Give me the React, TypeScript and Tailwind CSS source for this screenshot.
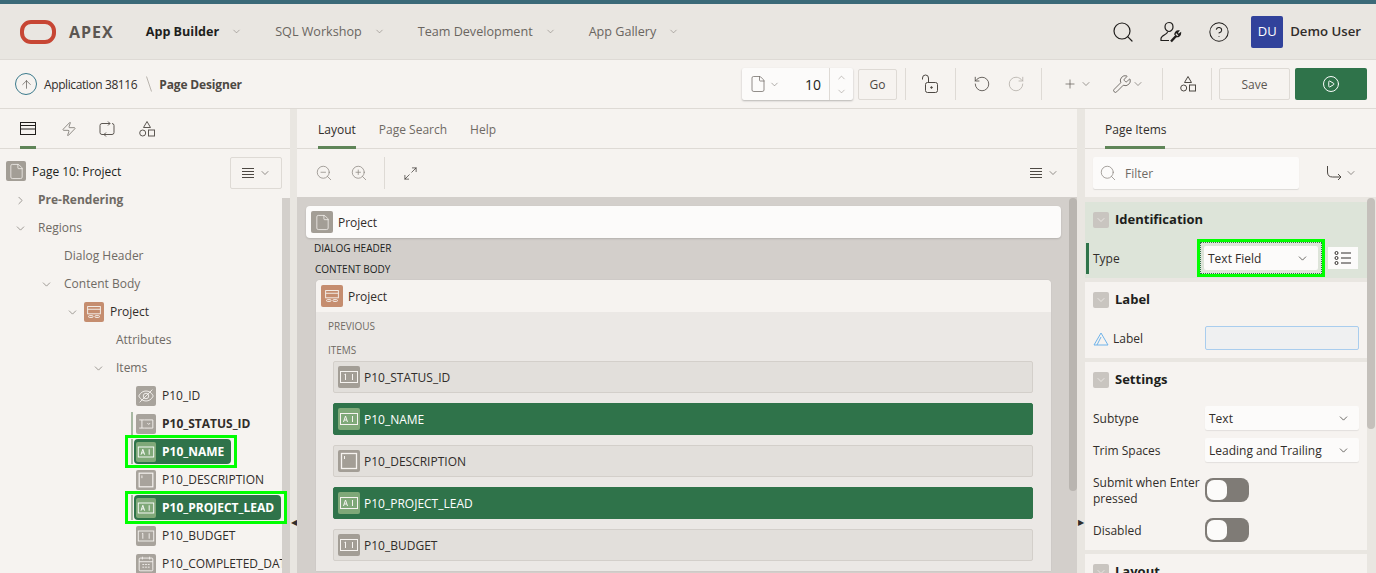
import { ReactNode } from "react";
import { ArrowUp, ChevronDown, ChevronRight, ChevronUp, CircleHelp, CirclePlay, File, Maximize2, Plus, RotateCcw, RotateCw, Search, Wrench, ZoomIn, ZoomOut, Zap } from "lucide-react";

type GlyphKind = "number" | "text" | "area" | "select" | "hidden" | "date";

function Glyph({ kind }: { kind: GlyphKind }) {
  return (
    <svg viewBox="0 0 22 22" className="w-[22px] h-[22px] block" fill="none" stroke="currentColor" strokeWidth="1">
      {kind === "hidden" ? (
        <>
          <path d="M3 11c2-4 5-5.500 8-5.500s6 1.500 8 5.500c-2 4-5 5.500-8 5.500s-6-1.500-8-5.500z" />
          <circle cx="11" cy="11" r="3" />
          <path d="M4 18L18 4" />
        </>
      ) : kind === "date" ? (
        <>
          <rect x="3.500" y="4.500" width="15" height="14" rx="1" />
          <path d="M3.500 8.500h15M7 3v3M15 3v3M7 11.500h2M10 11.500h2M13 11.500h2M7 14.500h2M10 14.500h2M13 14.500h2" />
        </>
      ) : kind === "area" ? (
        <>
          <rect x="3.500" y="3.500" width="15" height="15" strokeWidth="1.300" />
          <path d="M6.500 6v3" />
        </>
      ) : kind === "select" ? (
        <path d="M9.500 6.500h9v9h-9M3.500 6.500h6M3.500 15.500h6M6.500 6.500v9M12.500 10l1.500 1.500 1.500-1.500" />
      ) : kind === "text" ? (
        <>
          <rect x="2.500" y="5.500" width="17" height="11" />
          <path d="M5.500 14l2-6 2 6M6.200 12h2.600M14.500 8v6" />
        </>
      ) : (
        <>
          <rect x="2.500" y="5.500" width="17" height="11" />
          <path d="M6.500 8.500l1-.5v6M14.500 8v6" />
        </>
      )}
    </svg>
  );
}

function RegionGlyph() {
  return (
    <svg viewBox="0 0 22 22" className="w-[20px] h-[20px]" fill="none" stroke="#f6f3f0" strokeWidth="1">
      <rect x="4" y="5" width="14" height="8" />
      <path d="M4 8h14" />
      <rect x="5" y="15" width="5" height="2" rx="1" />
      <rect x="12" y="15" width="5" height="2" rx="1" />
    </svg>
  );
}

function Lines({ className }: { className?: string }) {
  return (
    <svg viewBox="0 0 14 12" className={`w-[14px] h-[12px] ${className ?? ""}`} fill="none" stroke="currentColor" strokeWidth="1">
      <path d="M1 1.500h12M1 4.500h12M1 7.500h12M1 10.500h12" />
    </svg>
  );
}

function ShapesIcon({ className }: { className?: string }) {
  return (
    <svg viewBox="0 0 16 18" className={`w-[16px] h-[18px] ${className ?? ""}`} fill="none" stroke="currentColor" strokeWidth="1">
      <path d="M8 1.500l3.500 6h-7z" />
      <circle cx="3.700" cy="13" r="3" />
      <rect x="9.500" y="10" width="6" height="6" />
    </svg>
  );
}

function PageIcon({ className }: { className: string }) {
  return (
    <span className={`flex flex-none items-center justify-center rounded-[2px] bg-[#a39e96] text-[#f6f3f0] ${className}`}>
      <File size={17} strokeWidth={1.1} />
    </span>
  );
}

function TopNav({ label, active }: { label: string; active?: boolean }) {
  return (
    <div className="flex items-center gap-[12px] mr-[33px]">
      <span className={`pt-[1px] ${active ? "font-bold text-[#201e1c]" : "text-[#6a655f]"}`}>{label}</span>
      <ChevronDown size={11} strokeWidth={1.2} className="text-[#7d7872]" />
    </div>
  );
}

function Sep() {
  return <div className="w-px h-[32px] bg-[#dedad5]" />;
}

function Tab({ label, active, width }: { label: string; active?: boolean; width?: string }) {
  return (
    <div className={`h-[40px] flex items-center text-[12px] border-b-[3px] pt-[4px] ${width ?? ""} ${active ? "border-[#5f8558] text-[#312d2a]" : "border-transparent text-[#6f6a64]"}`}>
      {label}
    </div>
  );
}

type TreeRow = {
  label: string;
  indent: string;
  chevron?: "right" | "down";
  kind?: GlyphKind;
  strong?: boolean;
  dark?: boolean;
  selected?: boolean;
  hasMark?: boolean;
  outlineWidth?: string;
};

const treeRows: TreeRow[] = [
  { label: "Pre-Rendering", indent: "pl-[14px]", chevron: "right", strong: true },
  { label: "Regions", indent: "pl-[14px]", chevron: "down" },
  { label: "Dialog Header", indent: "pl-[64px]" },
  { label: "Content Body", indent: "pl-[40px]", chevron: "down" },
  { label: "Project", indent: "pl-[66px]", chevron: "down", dark: true },
  { label: "Attributes", indent: "pl-[116px]" },
  { label: "Items", indent: "pl-[92px]", chevron: "down" },
  { label: "P10_ID", indent: "pl-[136px]", kind: "hidden", dark: true },
  { label: "P10_STATUS_ID", indent: "pl-[136px]", kind: "select", dark: true, strong: true, hasMark: true },
  { label: "P10_NAME", indent: "pl-[128px]", kind: "text", selected: true, outlineWidth: "w-[106px]" },
  { label: "P10_DESCRIPTION", indent: "pl-[136px]", kind: "area", dark: true },
  { label: "P10_PROJECT_LEAD", indent: "pl-[128px]", kind: "text", selected: true, outlineWidth: "w-[156px]" },
  { label: "P10_BUDGET", indent: "pl-[136px]", kind: "number", dark: true },
  { label: "P10_COMPLETED_DATE", indent: "pl-[136px]", kind: "date", dark: true },
];

function Tree({ row }: { row: TreeRow }) {
  const textColor = row.dark ? "text-[#312d2a]" : "text-[#6f6a64]";
  if (row.selected) {
    return (
      <div className={`relative z-10 h-[28px] ${row.indent}`}>
        <div className={`flex items-start h-[27px] pl-[3px] pr-[3px] pt-[1px] bg-[#f6f3f0] ${row.outlineWidth} outline-[3px] outline-[#00ff00]`}>
          <span className="w-[2px] h-[25px] bg-[#a7b8a2]" />
          <div className="flex-1 ml-[1px] flex items-center h-[25px] pl-[2px] rounded-[4px] bg-[#2f734a] text-white font-bold whitespace-nowrap">
            <span className="w-[20px] h-[20px] mr-[6px] flex-none rounded-[2px] bg-[#7fa878] flex items-center justify-center">
              <Glyph kind={row.kind ?? "text"} />
            </span>
            {row.label}
          </div>
        </div>
      </div>
    );
  }
  return (
    <div className={`relative h-[28px] w-[282px] overflow-hidden flex items-center whitespace-nowrap ${row.indent} ${textColor} ${row.strong ? "font-bold" : ""}`}>
      {row.hasMark && <span className="absolute left-[131px] top-[2px] h-[24px] w-[2px] bg-[#a7b8a2]" />}
      {row.chevron && (
        <span className={`${row.label === "Project" ? "w-[18px]" : "w-[24px]"} flex-none text-[#6f6a64]`}>
          {row.chevron === "right" ? <ChevronRight size={13} strokeWidth={1.2} /> : <ChevronDown size={13} strokeWidth={1.2} />}
        </span>
      )}
      {row.label === "Project" && (
        <span className="w-[20px] h-[20px] mr-[6px] rounded-[2px] bg-[#c58d6f] flex items-center justify-center">
          <RegionGlyph />
        </span>
      )}
      {row.kind && (
        <span className="w-[20px] h-[20px] mr-[6px] flex-none rounded-[2px] bg-[#a8a39c] text-[#f6f3f0] flex items-center justify-center">
          <Glyph kind={row.kind} />
        </span>
      )}
      {row.label}
    </div>
  );
}

function LayoutItem({ label, kind, active }: { label: string; kind: GlyphKind; active?: boolean }) {
  return (
    <div className={`h-[32px] flex items-center pl-[4px] rounded-[2px] border text-[12px] ${active ? "bg-[#2f734a] border-[#2f734a] text-white" : "bg-[#e2dfdb] border-[#d3cfca] text-[#312d2a]"}`}>
      <span className={`w-[22px] h-[22px] mr-[4px] rounded-[2px] flex items-center justify-center text-[#f6f3f0] ${active ? "bg-[#7fa878]" : "bg-[#a39e96]"}`}>
        <Glyph kind={kind} />
      </span>
      <span className="pt-[1px]">{label}</span>
    </div>
  );
}

function GroupHeader({ label }: { label: string }) {
  return (
    <div className="flex items-center h-[24px] pl-[8px]">
      <span className="w-[16px] h-[16px] mr-[6px] rounded-[2px] bg-[#c9c5c0] flex items-center justify-center text-[#f6f3f0]">
        <ChevronDown size={12} strokeWidth={1.4} />
      </span>
      <span className="text-[13px] font-bold text-[#201e1c]">{label}</span>
    </div>
  );
}

function Prop({ label, children, rowClass }: { label: ReactNode; children: ReactNode; rowClass?: string }) {
  return (
    <div className={`flex items-center pl-[8px] ${rowClass ?? "h-[32px]"}`}>
      <div className="w-[112px] pt-[1px] text-[12px] leading-[16px] text-[#312d2a]">{label}</div>
      {children}
    </div>
  );
}

function SelectBox({ value }: { value: string }) {
  return (
    <div className="w-[154px] h-[24px] rounded-[2px] bg-[#fcfbfa] shadow-[0_1px_1px_rgba(0,0,0,0.08)] pl-[4px] pr-[9px] flex items-center justify-between text-[12px] text-[#312d2a]">
      <span className="pt-[1px]">{value}</span>
      <ChevronDown size={13} strokeWidth={1.3} />
    </div>
  );
}

function Toggle() {
  return (
    <div className="w-[44px] h-[24px] rounded-[8px] bg-[#7f7b76] p-[2px]">
      <div className="w-[20px] h-[20px] rounded-[7px] bg-[#fcfbfa]" />
    </div>
  );
}

export default function App() {
  return (
    <div className="w-[1376px] h-[573px] overflow-hidden flex flex-col bg-[#f6f3f0] text-[#312d2a] text-[12px] font-['Open_Sans','Noto_Sans',sans-serif]">
      <div className="h-[4px] flex-none bg-[#3b6a78]" />

      <header className="h-[56px] flex-none flex items-center bg-[#e9e6e1] border-b border-[#dedad5] pl-[20px] pr-[15px] text-[12.6px]">
        <div className="w-[36px] h-[24px] rounded-[11px] border-[4px] border-[#c74634]" />
        <span className="ml-[13px] mr-[32px] pt-[1px] text-[16px] font-bold tracking-[1px] text-[#5c5752]">APEX</span>
        <TopNav label="App Builder" active />
        <TopNav label="SQL Workshop" />
        <TopNav label="Team Development" />
        <TopNav label="App Gallery" />
        <div className="ml-auto flex items-center">
          <Search size={24} strokeWidth={1.2} className="text-[#201e1c]" />
          <svg viewBox="0 0 24 24" className="ml-[23px] w-[24px] h-[24px] text-[#201e1c]" fill="none" stroke="currentColor" strokeWidth="1.2">
            <path d="M11 2.500c2.500 0 4 2 4 4.500s-2 4.500-4 4.500-4-2-4-4.500 1.500-4.500 4-4.500z" />
            <path d="M9.500 12c0 2.500-6.500 3-6.500 6.500v2h8" />
            <path d="M13 21.500l5.500-6" strokeWidth="2.400" />
            <path d="M17 15a3.500 3.500 0 0 1 3.500-4l-1.500 2 1.500 1.500 2-1.500a3.500 3.500 0 0 1-4.500 3.500" strokeWidth="1.400" />
          </svg>
          <CircleHelp size={22} strokeWidth={1.1} className="ml-[26px] text-[#201e1c]" />
          <span className="ml-[21px] w-[32px] h-[32px] rounded-[2px] bg-[#31429b] text-white text-[13px] flex items-center justify-center">DU</span>
          <span className="ml-[7px] text-[13.2px] font-semibold text-[#312d2a]">Demo User</span>
        </div>
      </header>

      <div className="h-[49px] flex-none flex items-center border-b border-[#dedad5] pl-[15px] pr-[9px]">
        <span className="w-[22px] h-[22px] rounded-full border border-[#3b7a8c] flex items-center justify-center text-[#4d4843]">
          <ArrowUp size={13} strokeWidth={1.2} />
        </span>
        <span className="ml-[7px] pt-[1px] tracking-[-0.4px] text-[#312d2a]">Application 38116</span>
        <svg viewBox="0 0 6 16" className="ml-[9px] mr-[7px] w-[6px] h-[16px]" fill="none" stroke="#a8a39c" strokeWidth="0.8">
          <path d="M0.500 0.500l5 15" />
        </svg>
        <span className="pt-[1px] font-bold tracking-[-0.15px] text-[#4d4843]">Page Designer</span>

        <div className="ml-auto flex items-center">
          <div className="w-[111px] h-[32px] flex items-center rounded-[2px] bg-[#fcfbfa] shadow-[0_1px_2px_rgba(0,0,0,0.25)]">
            <File size={18} strokeWidth={1} className="ml-[7px] text-[#6f6a64]" />
            <ChevronDown size={11} strokeWidth={1.2} className="ml-[2px] text-[#6f6a64]" />
            <span className="ml-auto mr-[8px] text-[14px] text-[#201e1c]">10</span>
            <div className="w-[24px] h-full border-l border-[#dedad5] flex flex-col items-center justify-center gap-[3px] text-[#8b8680]">
              <ChevronUp size={11} strokeWidth={1.1} />
              <ChevronDown size={11} strokeWidth={1.1} />
            </div>
          </div>
          <div className="ml-[5px] pt-[1px] w-[39px] h-[31px] border border-[#dedad5] rounded-[2px] flex items-center justify-center text-[#4d4843]">Go</div>
          <div className="ml-[8px]"><Sep /></div>
          <svg viewBox="0 0 18 20" className="ml-[15px] w-[18px] h-[20px] text-[#4d4843]" fill="none" stroke="currentColor" strokeWidth="1">
            <rect x="4.500" y="8.500" width="12" height="10" rx="2" />
            <path d="M1.500 5.500v-1.500a3 3 0 0 1 6 0v4.500" />
            <circle cx="10.500" cy="13.500" r="0.800" fill="currentColor" />
          </svg>
          <div className="ml-[16px]"><Sep /></div>
          <RotateCcw size={18} strokeWidth={1.1} className="ml-[17px] text-[#4d4843]" />
          <RotateCw size={18} strokeWidth={1.1} className="ml-[16px] text-[#b5b0aa]" />
          <div className="ml-[16px]"><Sep /></div>
          <Plus size={14} strokeWidth={1.2} className="ml-[21px] text-[#5c5752]" />
          <ChevronDown size={12} strokeWidth={1.2} className="ml-[3px] text-[#5c5752]" />
          <Wrench size={20} strokeWidth={1} className="ml-[20px] text-[#5c5752]" />
          <ChevronDown size={12} strokeWidth={1.2} className="ml-[0px] text-[#5c5752]" />
          <div className="ml-[18px]"><Sep /></div>
          <ShapesIcon className="ml-[17px] text-[#4d4843]" />
          <div className="ml-[15px]"><Sep /></div>
          <div className="ml-[7px] pt-[1px] w-[71px] h-[32px] border border-[#dedad5] rounded-[2px] flex items-center justify-center text-[#5c5752]">Save</div>
          <div className="ml-[5px] w-[72px] h-[32px] rounded-[2px] bg-[#2f734a] flex items-center justify-center text-white">
            <CirclePlay size={18} strokeWidth={1.3} />
          </div>
        </div>
      </div>

      <div className="flex-1 min-h-0 flex">
        <aside className="w-[290px] flex-none flex flex-col">
          <div className="h-[40px] flex-none flex items-center pl-[20px] border-b border-[#dedad5] text-[#5c5752]">
            <div className="h-[40px] w-[16px] flex items-center border-b-[3px] border-[#5f8558] pt-[3px] text-[#201e1c]">
              <svg viewBox="0 0 16 13" className="w-[16px] h-[13px]" fill="none" stroke="currentColor" strokeWidth="1">
                <rect x="0.500" y="0.500" width="15" height="12" />
                <path d="M0.500 3.500h15M0.500 7h15" />
              </svg>
            </div>
            <Zap size={16} strokeWidth={1} className="ml-[25px]" />
            <svg viewBox="0 0 16 16" className="ml-[22px] w-[16px] h-[16px]" fill="none" stroke="currentColor" strokeWidth="1">
              <path d="M5 13.500H3a2 2 0 0 1-2-2v-7a2 2 0 0 1 2-2h8M9 .500l2 2-2 2M11 13.500h2a2 2 0 0 0 2-2v-7a2 2 0 0 0-2-2M5 13.500h6M7 11.500l-2 2 2 2" />
            </svg>
            <ShapesIcon className="ml-[24px]" />
          </div>
          <div className="flex-1 min-h-0 flex">
            <div className="w-[282px] flex-none">
              <div className="h-[37px] flex items-start pl-[6px] pt-[8px]">
                <PageIcon className="w-[20px] h-[20px] mt-[4px]" />
                <span className="ml-[6px] mt-[6px] text-[#201e1c]">Page 10: Project</span>
                <div className="ml-auto w-[52px] h-[32px] border border-[#dedad5] rounded-[2px] flex items-center justify-center gap-[4px] text-[#4d4843]">
                  <Lines />
                  <ChevronDown size={12} strokeWidth={1.2} />
                </div>
              </div>
              {treeRows.map((row) => (
                <Tree key={row.label} row={row} />
              ))}
            </div>
            <div className="w-[8px] mt-[49px] bg-[#d3cfcb]" />
          </div>
        </aside>

        <div className="w-[7px] flex-none bg-[#e9e6e1] flex items-center justify-center">
          <span className="mt-[362px] text-[8px] text-[#312d2a]">◀</span>
        </div>

        <main className="w-[780px] flex-none flex flex-col">
          <div className="h-[40px] flex-none flex pl-[21px] gap-[23px] border-b border-[#dedad5]">
            <Tab label="Layout" active />
            <Tab label="Page Search" />
            <Tab label="Help" />
          </div>
          <div className="h-[48px] flex-none flex items-center pl-[18px] pr-[18px] text-[#8b8680]">
            <ZoomOut size={18} strokeWidth={1} />
            <ZoomIn size={18} strokeWidth={1} className="ml-[17px]" />
            <div className="ml-[16px]"><Sep /></div>
            <Maximize2 size={15} strokeWidth={1.1} className="ml-[18px] text-[#312d2a]" />
            <div className="ml-auto flex items-center gap-[4px] text-[#4d4843]">
              <Lines />
              <ChevronDown size={12} strokeWidth={1.2} />
            </div>
          </div>
          <div className="flex-1 min-h-0 flex overflow-hidden bg-[#d3cfcb]">
            <div className="w-[772px] pl-[9px] pr-[8px] pt-[9px] overflow-hidden">
              <div className="h-[32px] flex items-center pl-[5px] rounded-[4px] bg-[#fcfbfa] shadow-[0_1px_2px_rgba(0,0,0,0.15)]">
                <PageIcon className="w-[22px] h-[22px]" />
                <span className="ml-[5px] pt-[1px]">Project</span>
              </div>
              <div className="pl-[8px] pt-[2px] h-[21px] leading-[17px] text-[10px] text-[#201e1c]">DIALOG HEADER</div>
              <div className="pl-[9px] pt-[1px] h-[21px] leading-[19px] text-[10px] text-[#201e1c]">CONTENT BODY</div>
              <div className="ml-[10px] mr-[10px] rounded-t-[4px] overflow-hidden bg-[#ebe8e5] pb-[10px] shadow-[0_0_1px_rgba(0,0,0,0.2)]">
                <div className="h-[32px] flex items-center pl-[5px] bg-[#f6f3f0]">
                  <span className="w-[22px] h-[22px] rounded-[2px] bg-[#c58d6f] flex items-center justify-center">
                    <RegionGlyph />
                  </span>
                  <span className="ml-[5px] pt-[1px]">Project</span>
                </div>
                <div className="pl-[12px] pt-[7px] h-[24px] text-[10px] text-[#6f6a64]">PREVIOUS</div>
                <div className="pl-[12px] pt-[7px] h-[25px] text-[10px] text-[#6f6a64]">ITEMS</div>
                <div className="pl-[17px] pr-[18px] flex flex-col gap-[10px]">
                  <LayoutItem label="P10_STATUS_ID" kind="number" />
                  <LayoutItem label="P10_NAME" kind="text" active />
                  <LayoutItem label="P10_DESCRIPTION" kind="area" />
                  <LayoutItem label="P10_PROJECT_LEAD" kind="text" active />
                  <LayoutItem label="P10_BUDGET" kind="number" />
                </div>
              </div>
            </div>
            <div className="w-[8px] pt-[1px]">
              <div className="h-[293px] rounded-[4px] bg-[#b9b5b0]" />
            </div>
          </div>
        </main>

        <div className="w-[8px] flex-none bg-[#e9e6e1] flex items-center justify-center">
          <span className="mt-[362px] text-[8px] text-[#312d2a]">▶</span>
        </div>

        <aside className="flex-1 min-w-0 flex flex-col">
          <div className="h-[40px] flex-none pl-[20px] border-b border-[#dedad5]">
            <Tab label="Page Items" active width="w-[60px] whitespace-nowrap" />
          </div>
          <div className="h-[48px] flex-none flex items-center pl-[8px] pr-[19px]">
            <div className="w-[206px] h-[32px] rounded-[2px] bg-[#fcfbfa] shadow-[0_1px_1px_rgba(0,0,0,0.1)] pl-[6px] flex items-center text-[#8b8680]">
              <Search size={18} strokeWidth={1} />
              <span className="ml-[8px] pt-[1px] text-[#6f6a64]">Filter</span>
            </div>
            <div className="ml-auto flex items-center gap-[3px] text-[#4d4843]">
              <svg viewBox="0 0 16 16" className="w-[16px] h-[16px]" fill="none" stroke="currentColor" strokeWidth="1">
                <path d="M1.500 1v6q0 5 5 5h8M12 9l3 3-3 3" />
              </svg>
              <ChevronDown size={12} strokeWidth={1.2} />
            </div>
          </div>
          <div className="flex-1 min-h-0 flex">
            <div className="w-[282px] overflow-hidden bg-[#e9e6e1] pt-[5px] flex flex-col gap-[4px]">
              <div className="flex-none h-[76px] bg-[#dde4d9] pt-[6px]">
                <GroupHeader label="Identification" />
                <div className="relative flex items-center h-[32px] mt-[10px] pl-[8px]">
                  <span className="absolute left-[1px] top-[1px] w-[3px] h-[31px] bg-[#2f734a]" />
                  <div className="w-[107px] pt-[1px] text-[#312d2a]">Type</div>
                  <div className="w-[122px] h-[32px] p-[3px] border border-dotted border-[#2f734a] outline-[3px] outline-[#00ff00]">
                    <div className="h-full rounded-[2px] bg-[#fcfbfa] pl-[4px] pr-[9px] flex items-center justify-between">
                      <span className="pt-[1px]">Text Field</span>
                      <ChevronDown size={13} strokeWidth={1.3} />
                    </div>
                  </div>
                  <div className="ml-[6px] w-[30px] h-[22px] bg-[#fcfbfa] flex items-center justify-center">
                    <svg viewBox="0 0 18 14" className="w-[18px] h-[14px]" fill="none" stroke="currentColor" strokeWidth="1">
                      <circle cx="2.500" cy="2" r="1.500" />
                      <circle cx="2.500" cy="7" r="1.500" />
                      <circle cx="2.500" cy="12" r="1.500" />
                      <path d="M7 2h10M7 7h10M7 12h10" />
                    </svg>
                  </div>
                </div>
              </div>
              <div className="flex-none h-[76px] bg-[#f6f3f0] pt-[6px]">
                <GroupHeader label="Label" />
                <Prop
                  label={
                    <span className="flex items-center gap-[4px]">
                      <svg viewBox="0 0 16 16" className="w-[16px] h-[16px]" fill="none" stroke="#6fb3ea" strokeWidth="1">
                        <path d="M8 2l7 12H1zM8 6l-4 8" />
                      </svg>
                      Label
                    </span>
                  }
                  rowClass="h-[32px] mt-[10px]"
                >
                  <div className="w-[154px] h-[24px] rounded-[2px] bg-[#eff0f1] border border-[#a9cdee]" />
                </Prop>
              </div>
              <div className="flex-none h-[188px] bg-[#f6f3f0] pt-[6px]">
                <GroupHeader label="Settings" />
                <Prop label="Subtype" rowClass="h-[32px] mt-[10px]"><SelectBox value="Text" /></Prop>
                <Prop label="Trim Spaces"><SelectBox value="Leading and Trailing" /></Prop>
                <Prop label={<>Submit when Enter<br />pressed</>} rowClass="h-[48px]"><Toggle /></Prop>
                <Prop label="Disabled"><Toggle /></Prop>
              </div>
              <div className="flex-none h-[40px] bg-[#f6f3f0] pt-[6px]">
                <GroupHeader label="Layout" />
              </div>
            </div>
            <div className="w-[9px] bg-[#e9e6e1] pt-[1px]">
              <div className="w-[8px] h-[231px] rounded-[4px] bg-[#c4c0bb]" />
            </div>
          </div>
        </aside>
      </div>
    </div>
  );
}
